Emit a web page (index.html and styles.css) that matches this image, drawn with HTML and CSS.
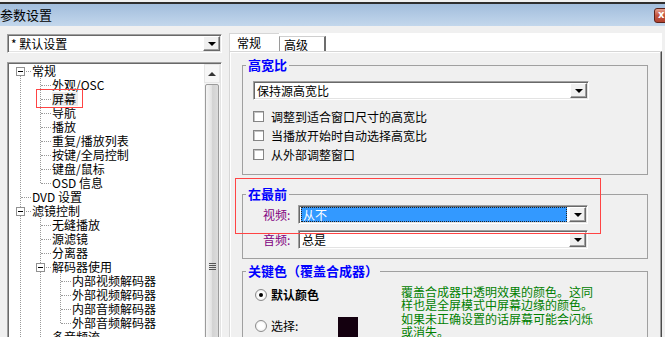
FILE: index.html
```html
<!DOCTYPE html>
<html lang="zh-CN">
<head>
    <meta charset="UTF-8">
    <meta name="viewport" content="width=device-width, initial-scale=1.0">
    <title>参数设置</title>
    <link rel="stylesheet" href="styles.css">
</head>
<body>

<div class="window">
    <div class="titlebar">
        <span class="title">参数设置</span>
        <span class="close">x</span>
    </div>

    <div class="main">
        <!-- left: preset + page tree -->
        <div class="side">
            <div class="combo">
                <span class="combo-text">* 默认设置</span>
                <span class="drop"></span>
            </div>
            <div class="treebox">
                <div class="tree">
                    <ul class="root">
                        <li><span class="exp"></span><span class="label">常规</span>
                            <ul>
                                <li><span class="label">外观/OSC</span></li>
                                <li><span class="label current">屏幕</span></li>
                                <li><span class="label">导航</span></li>
                                <li><span class="label">播放</span></li>
                                <li><span class="label">重复/播放列表</span></li>
                                <li><span class="label">按键/全局控制</span></li>
                                <li><span class="label">键盘/鼠标</span></li>
                                <li><span class="label">OSD 信息</span></li>
                            </ul>
                        </li>
                        <li><span class="label">DVD 设置</span></li>
                        <li><span class="exp"></span><span class="label">滤镜控制</span>
                            <ul>
                                <li><span class="label">无缝播放</span></li>
                                <li><span class="label">源滤镜</span></li>
                                <li><span class="label">分离器</span></li>
                                <li><span class="exp"></span><span class="label">解码器使用</span>
                                    <ul>
                                        <li><span class="label">内部视频解码器</span></li>
                                        <li><span class="label">外部视频解码器</span></li>
                                        <li><span class="label">内部音频解码器</span></li>
                                        <li><span class="label">外部音频解码器</span></li>
                                    </ul>
                                </li>
                                <li><span class="label">多音频流</span></li>
                                <li><span class="label">字幕</span></li>
                            </ul>
                        </li>
                    </ul>
                </div>
                <div class="vscroll">
                    <div class="sb-up"></div>
                    <div class="sb-thumb"><span class="grip"></span></div>
                </div>
            </div>
        </div>

        <!-- right: tabs + options -->
        <div class="content">
            <div class="tabs">
                <span class="tab active">常规</span>
                <span class="tab">高级</span>
            </div>
            <div class="pane">
                <fieldset class="group ratio">
                    <legend>高宽比</legend>
                    <div class="combo wide">
                        <span class="combo-text">保持源高宽比</span>
                        <span class="drop"></span>
                    </div>
                    <div class="check-row first"><span class="check"></span>调整到适合窗口尺寸的高宽比</div>
                    <div class="check-row"><span class="check"></span>当播放开始时自动选择高宽比</div>
                    <div class="check-row"><span class="check"></span>从外部调整窗口</div>
                </fieldset>

                <fieldset class="group ontop">
                    <legend>在最前</legend>
                    <div class="field-row">
                        <span class="field-label">视频:</span>
                        <div class="combo field">
                            <span class="combo-text selected">从不</span>
                            <span class="drop"></span>
                        </div>
                    </div>
                    <div class="field-row second">
                        <span class="field-label">音频:</span>
                        <div class="combo field">
                            <span class="combo-text">总是</span>
                            <span class="drop"></span>
                        </div>
                    </div>
                </fieldset>

                <fieldset class="group keycolor">
                    <legend>关键色（覆盖合成器）</legend>
                    <div class="key">
                        <div class="key-opts">
                            <div class="radio-row"><span class="radio on"></span><b>默认颜色</b></div>
                            <div class="radio-row second"><span class="radio"></span><span class="radio-label">选择:</span><span class="swatch"></span></div>
                        </div>
                        <div class="note">覆盖合成器中透明效果的颜色。这同<br>样也是全屏模式中屏幕边缘的颜色。<br>如果未正确设置的话屏幕可能会闪烁<br>或消失。</div>
                    </div>
                </fieldset>
            </div>
        </div>
    </div>

    <div class="mark mark-tree"></div>
    <div class="mark mark-top"></div>
</div>

</body>
</html>
```

FILE: styles.css
```css
html, body {
    margin: 0;
    height: 100%;
    overflow: hidden;
}
body {
    background: #f0f0f0;
    font-family: "Noto Sans CJK SC", "Liberation Sans", sans-serif;
    font-size: 12px;
    color: #000;
}
.window {
    position: relative;
    height: 337px;
}

/* title bar */
.titlebar {
    margin-top: 2px;
    border-top: 2px solid #2e2e2e;
    height: 22px;
    background: linear-gradient(#a2bddc, #c3d7ec);
    display: flex;
    justify-content: space-between;
    align-items: flex-start;
}
.title {
    font-size: 13px;
    line-height: 22px;
}
.close {
    margin-top: 4px;
    margin-right: -15px;
    width: 26px;
    height: 15px;
    box-sizing: border-box;
    padding-left: 3px;
    border: 1px solid #5e2219;
    border-radius: 3px;
    background: linear-gradient(#e6a08e, #c4553f 50%, #b0412f);
    color: #fff;
    font-family: "DejaVu Sans", sans-serif;
    font-weight: bold;
    font-size: 10px;
    line-height: 12px;
}

.main {
    display: flex;
    height: 311px;
}

/* left column */
.side {
    margin-left: 7px;
    width: 215px;
    padding-top: 8px;
    display: flex;
    flex-direction: column;
    gap: 9px;
}
.combo {
    height: 19px;
    box-sizing: border-box;
    display: flex;
    align-items: center;
    background: #fff;
    border: 1px solid;
    border-color: #a0a0a0 #fff #fff #a0a0a0;
    box-shadow: inset 1px 1px #696969, inset -1px -1px #e3e3e3;
    padding: 1px;
}
.combo-text {
    flex: 1;
    padding-left: 2px;
    line-height: 15px;
    white-space: nowrap;
    overflow: hidden;
}
.combo-text.selected {
    margin: 0 2px 0 1px;
    padding-left: 1px;
    height: 15px;
    box-sizing: border-box;
    line-height: 13px;
    background: #3399ff;
    color: #fff;
    border: 1px dotted #222;
}
.drop {
    width: 17px;
    height: 15px;
    box-sizing: border-box;
    background: #f0f0f0;
    border: 1px solid;
    border-color: #fff #696969 #696969 #fff;
    box-shadow: inset -1px -1px #a0a0a0;
    display: flex;
    align-items: center;
    justify-content: center;
}
.drop::after {
    content: "";
    margin-top: 1px;
    border-left: 4px solid transparent;
    border-right: 4px solid transparent;
    border-top: 4px solid #000;
}

.treebox {
    height: 290px;
    box-sizing: border-box;
    display: flex;
    background: #fff;
    border: 1px solid;
    border-color: #a0a0a0 #fff #fff #a0a0a0;
    box-shadow: inset 1px 1px #696969, inset -1px -1px #e3e3e3;
    padding: 1px;
}
.tree {
    flex: 1;
    overflow: hidden;
    line-height: 14px;
}
.tree ul {
    list-style: none;
    margin: 0;
    padding: 0;
    position: relative;
}
.tree .root {
    margin-left: 11px;
}
.tree ul ul {
    margin-left: 8px;
}
.tree ul::before {
    content: "";
    position: absolute;
    left: 0;
    top: 0;
    bottom: 7px;
    border-left: 1px dotted #9a9a9a;
}
.tree .root::before {
    top: 7px;
}
.tree li {
    position: relative;
    padding-left: 12px;
}
.tree li::before {
    content: "";
    position: absolute;
    left: 1px;
    top: 7px;
    width: 10px;
    border-top: 1px dotted #9a9a9a;
}
.label {
    display: inline-block;
    vertical-align: top;
    height: 14px;
    padding-right: 2px;
    white-space: nowrap;
}
.label.current {
    background: #ececec;
}
.exp {
    position: absolute;
    left: -4px;
    top: 3px;
    width: 9px;
    height: 9px;
    box-sizing: border-box;
    border: 1px solid #919191;
    background: #fff;
    z-index: 1;
}
.exp::after {
    content: "";
    position: absolute;
    left: 1px;
    top: 3px;
    width: 5px;
    height: 1px;
    background: #000;
}

.vscroll {
    width: 16px;
    display: flex;
    flex-direction: column;
    background: #f4f4f4;
}
.sb-up {
    height: 19px;
    box-sizing: border-box;
    border: 1px solid #e6e6e6;
    background: #f6f6f6;
    display: flex;
    align-items: center;
    justify-content: center;
}
.sb-up::after {
    content: "";
    border-left: 4px solid transparent;
    border-right: 4px solid transparent;
    border-bottom: 4px solid #333;
}
.sb-thumb {
    flex: 1;
    margin: 1px 1px 0;
    border: 1px solid #9b9b9b;
    border-radius: 2px;
    background: linear-gradient(to right, #f4f4f4, #e4e4e4 45%, #d3d3d3 55%, #dcdcdc);
}
.grip {
    display: block;
    width: 7px;
    height: 7px;
    margin: 178px auto 0;
    background: repeating-linear-gradient(#555 0 1px, transparent 1px 2px);
}

/* right column */
.content {
    margin-left: 7px;
    width: 433px;
    padding-top: 7px;
    display: flex;
    flex-direction: column;
}
.tabs {
    height: 20px;
    background: #fff;
    display: flex;
    align-items: flex-end;
}
.tab {
    box-sizing: border-box;
    white-space: nowrap;
}
.tab.active {
    width: 50px;
    height: 18px;
    border-left: 1px solid #d6d6d6;
    border-top: 1px solid #d6d6d6;
    padding-left: 7px;
    line-height: 17px;
}
.tab:not(.active) {
    width: 47px;
    height: 15px;
    border-left: 1px solid #9a9a9a;
    border-top: 1px solid #cfcfcf;
    border-right: 2px solid #6d6d6d;
    padding-left: 4px;
    line-height: 16px;
}
.pane {
    flex: 1;
    background: #f0f0f0;
    border-top: 1px solid #d6d6d6;
    border-left: 1px solid #d6d6d6;
    border-right: 1px solid #4b4b4b;
    box-shadow: inset -1px 0 #a0a0a0, inset 1px 1px #fff;
    padding: 5px 13px 0 12px;
}

.group {
    margin: 0;
    padding: 0 0 10px;
    min-width: 0;
    border: 1px solid #a0a0a0;
}
.group legend {
    margin-left: 3px;
    padding: 0 2px;
    font-size: 13px;
    font-weight: bold;
    line-height: 16px;
    color: #0000ff;
}

.combo.wide {
    margin: 8px 0 0 10px;
    width: 336px;
}
.check-row {
    display: flex;
    align-items: center;
    gap: 7px;
    height: 19px;
    margin-left: 10px;
    line-height: 19px;
}
.check-row.first {
    margin-top: 7px;
}
.check {
    width: 11px;
    height: 11px;
    box-sizing: border-box;
    background: #fff;
    border: 1px solid #858585;
    box-shadow: inset 1px 1px #c4c4c4;
}

.group.ontop {
    margin-top: 11px;
    padding-bottom: 9px;
}
.field-row {
    display: flex;
    align-items: center;
    margin-top: 3px;
    padding-left: 20px;
}
.field-row.second {
    margin-top: 6px;
}
.field-label {
    width: 35px;
    color: #800080;
    line-height: 19px;
}
.combo.field {
    width: 290px;
}

.group.keycolor {
    margin-top: 4px;
    padding-top: 6px;
}
.key {
    display: flex;
}
.key-opts {
    width: 158px;
}
.radio-row {
    display: flex;
    align-items: center;
    gap: 4px;
    height: 20px;
    padding-left: 12px;
    line-height: 20px;
}
.radio-row.second {
    margin-top: 11px;
}
.radio {
    position: relative;
    width: 12px;
    height: 12px;
    box-sizing: border-box;
    border: 1px solid #8c8c8c;
    border-radius: 50%;
    background: radial-gradient(#fff 40%, #e2e2e2);
}
.radio.on::after {
    content: "";
    position: absolute;
    left: 3px;
    top: 3px;
    width: 4px;
    height: 4px;
    border-radius: 50%;
    background: #000;
}
.radio-label {
    width: 63px;
}
.swatch {
    width: 20px;
    height: 21px;
    margin-top: 2px;
    background: #14000f;
}
.note {
    color: #008000;
    line-height: 13.3px;
    white-space: nowrap;
}

/* red annotation boxes */
.mark {
    position: absolute;
    box-sizing: border-box;
    border: 1px solid #f44;
}
.mark-tree {
    left: 36px;
    top: 87px;
    width: 47px;
    height: 19px;
}
.mark-top {
    left: 235px;
    top: 176px;
    width: 366px;
    height: 56px;
}
```
